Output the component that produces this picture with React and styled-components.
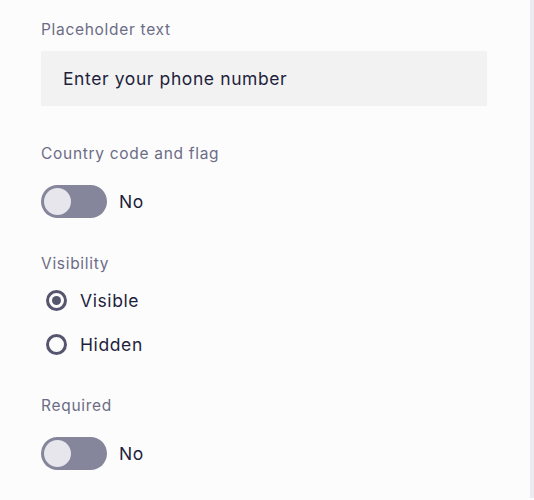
import React, { useState } from "react";
import styled, { createGlobalStyle } from "styled-components";

const Global = createGlobalStyle`
  html, body { margin: 0; padding: 0; background: #fcfcfc; }
  body { font-family: Inter, "Noto Sans", sans-serif; -webkit-font-smoothing: antialiased; }
`;

const Page = styled.div`
  display: flex;
  height: 500px;
  width: 534px;
  box-sizing: border-box;
`;

const Panel = styled.div`
  flex: 1;
  padding: 19px 43px 0 41px;
  display: flex;
  flex-direction: column;
`;

const Scroll = styled.div`
  width: 4px;
  height: 498px;
  background: #ebebf0;
`;

const Field = styled.div`
  display: flex;
  flex-direction: column;
  margin-bottom: ${(p) => p.$mb || 0}px;
`;

const Label = styled.div`
  font-size: 15.5px;
  line-height: 22px;
  color: #6c6c86;
  letter-spacing: 0.7px;
  margin-bottom: ${(p) => p.$mb || 0}px;
`;

const Input = styled.input`
  box-sizing: border-box;
  height: 55px;
  width: 446px;
  border: none;
  outline: none;
  background: #f2f2f2;
  padding: 0 22px;
  font-family: inherit;
  font-size: 17.5px;
  letter-spacing: 0.6px;
  color: #1f1f3d;
  &::placeholder { color: #1f1f3d; }
`;

const ToggleRow = styled.label`
  display: flex;
  align-items: center;
  gap: 12px;
  cursor: pointer;
`;

const Track = styled.span`
  width: 66px;
  height: 33px;
  border-radius: 17px;
  background: ${(p) => (p.$on ? "#4b4b6b" : "#85859b")};
  display: flex;
  align-items: center;
  padding: 0 3px;
  box-sizing: border-box;
  justify-content: ${(p) => (p.$on ? "flex-end" : "flex-start")};
`;

const Knob = styled.span`
  width: 27px;
  height: 27px;
  border-radius: 50%;
  background: #e6e6ec;
`;

const OptionText = styled.span`
  font-size: 17.5px;
  letter-spacing: 0.6px;
  color: #1f1f3d;
`;

const RadioList = styled.div`
  display: flex;
  flex-direction: column;
  gap: 18px;
`;

const RadioRow = styled.label`
  display: flex;
  align-items: center;
  gap: 13px;
  height: 26px;
  padding-left: 5px;
  cursor: pointer;
`;

const RadioCircle = styled.span`
  width: 21px;
  height: 21px;
  box-sizing: border-box;
  border-radius: 50%;
  border: 3px solid #55556f;
  display: flex;
  align-items: center;
  justify-content: center;
  &::after {
    content: "";
    width: 9px;
    height: 9px;
    border-radius: 50%;
    background: #55556f;
    display: ${(p) => (p.$checked ? "block" : "none")};
  }
`;

function Toggle({ on, onChange }) {
  return (
    <ToggleRow onClick={() => onChange(!on)}>
      <Track $on={on}>
        <Knob />
      </Track>
      <OptionText>{on ? "Yes" : "No"}</OptionText>
    </ToggleRow>
  );
}

export default function App() {
  const [flag, setFlag] = useState(false);
  const [req, setReq] = useState(false);
  const [vis, setVis] = useState("visible");
  return (
    <>
      <Global />
      <Page>
        <Panel>
          <Field $mb={37}>
            <Label $mb={10}>Placeholder text</Label>
            <Input placeholder="Enter your phone number" />
          </Field>
          <Field $mb={35}>
            <Label $mb={20}>Country code and flag</Label>
            <Toggle on={flag} onChange={setFlag} />
          </Field>
          <Field $mb={38}>
            <Label $mb={12}>Visibility</Label>
            <RadioList>
              {[
                ["visible", "Visible"],
                ["hidden", "Hidden"],
              ].map(([v, t]) => (
                <RadioRow key={v} onClick={() => setVis(v)}>
                  <RadioCircle $checked={vis === v} />
                  <OptionText>{t}</OptionText>
                </RadioRow>
              ))}
            </RadioList>
          </Field>
          <Field>
            <Label $mb={20}>Required</Label>
            <Toggle on={req} onChange={setReq} />
          </Field>
        </Panel>
        <Scroll />
      </Page>
    </>
  );
}
